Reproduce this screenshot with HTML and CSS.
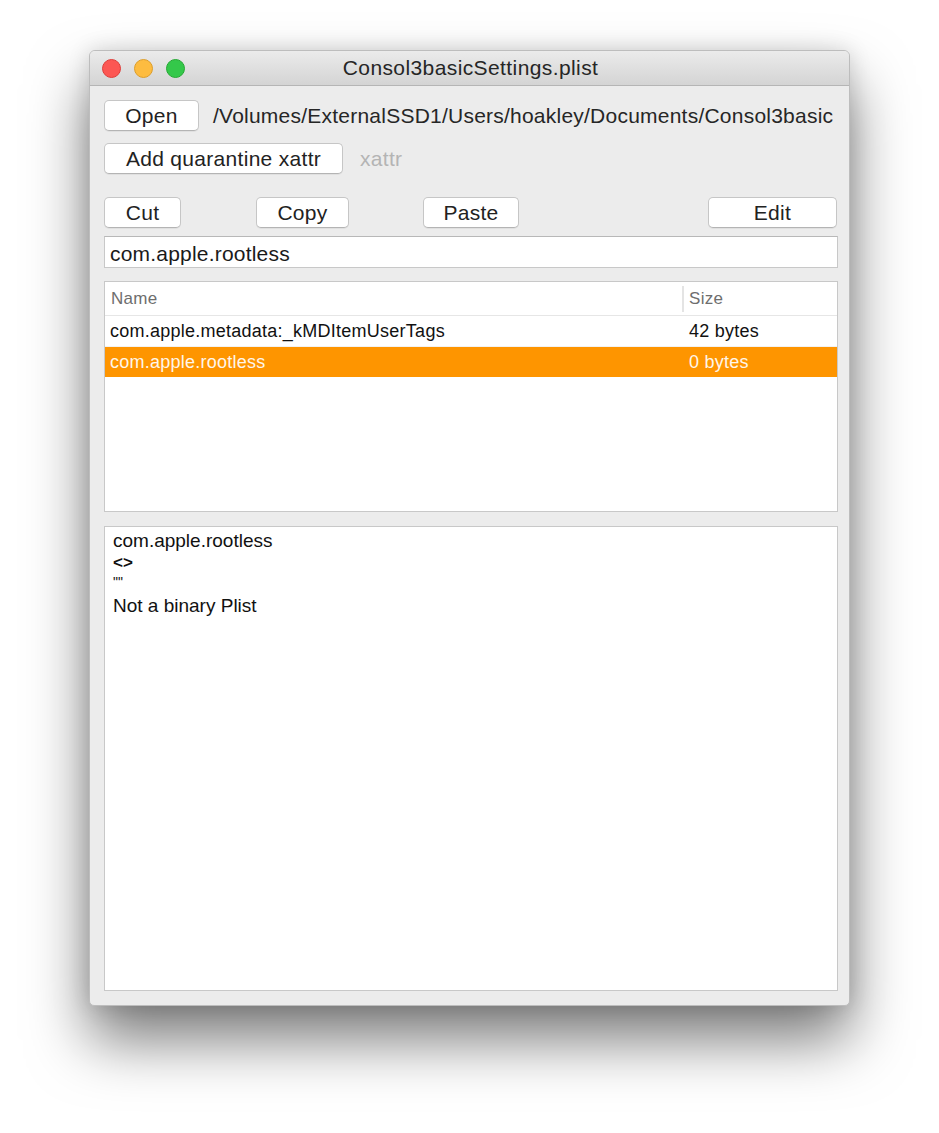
FILE: index.html
```html
<!DOCTYPE html>
<html>
<head>
<meta charset="utf-8">
<link rel="stylesheet" href="styles.css">
</head>
<body>
<div class="window">
  <div class="titlebar">
    <div class="lights">
      <span class="light red"></span>
      <span class="light yellow"></span>
      <span class="light green"></span>
    </div>
    <div class="title">Consol3basicSettings.plist</div>
  </div>
  <div class="content">
    <div class="row row-open">
      <button class="btn btn-open">Open</button>
      <span class="path">/Volumes/ExternalSSD1/Users/hoakley/Documents/Consol3basic</span>
    </div>
    <div class="row row-quar">
      <button class="btn btn-quar">Add quarantine xattr</button>
      <span class="hint">xattr</span>
    </div>
    <div class="row row-edit">
      <button class="btn btn-cut">Cut</button>
      <button class="btn btn-copy">Copy</button>
      <button class="btn btn-paste">Paste</button>
      <button class="btn btn-edit">Edit</button>
    </div>
    <div class="field">com.apple.rootless</div>
    <div class="table">
      <div class="thead">
        <div class="col-name">Name</div>
        <div class="col-size">Size</div>
      </div>
      <div class="trow">
        <div class="col-name">com.apple.metadata:_kMDItemUserTags</div>
        <div class="col-size">42 bytes</div>
      </div>
      <div class="trow selected">
        <div class="col-name">com.apple.rootless</div>
        <div class="col-size">0 bytes</div>
      </div>
    </div>
    <div class="textarea">
      <div class="tline l1">com.apple.rootless</div>
      <div class="tline l2">&lt;&gt;</div>
      <div class="tline l3">""</div>
      <div class="tline l4">Not a binary Plist</div>
    </div>
  </div>
</div>
</body>
</html>
```

FILE: styles.css
```css
html, body {
  margin: 0;
  padding: 0;
  background: #ffffff;
}
html { height: 1133px; }
body {
  font-family: "Liberation Sans", Arial, sans-serif;
  color: #1e1e1e;
  padding: 50px 0 0 89px;
  height: 1133px;
  box-sizing: border-box;
}
.window {
  width: 761px;
  height: 956px;
  box-sizing: border-box;
  border: 1px solid #bdbdbd;
  border-radius: 6px 6px 5px 5px;
  background: #ececec;
  box-shadow: 0 34px 60px rgba(0,0,0,0.52), 0 0 22px rgba(0,0,0,0.14);
  display: flex;
  flex-direction: column;
  overflow: hidden;
}
.titlebar {
  height: 34px;
  flex: none;
  background: linear-gradient(#ebebeb, #d4d4d4);
  border-bottom: 1px solid #b5b5b5;
  display: flex;
  align-items: center;
  position: relative;
}
.lights {
  display: flex;
  gap: 13px;
  margin-left: 12px;
}
.light {
  width: 19px;
  height: 19px;
  border-radius: 50%;
  box-sizing: border-box;
}
.red { background: #fc5753; border: 1px solid #df3d39; }
.yellow { background: #fdbc40; border: 1px solid #dd9e2a; }
.green { background: #34c84a; border: 1px solid #25a933; }
.title {
  position: absolute;
  left: 0;
  right: 0;
  top: 0;
  bottom: 0;
  display: flex;
  align-items: center;
  justify-content: center;
  font-size: 21px;
  letter-spacing: 0.4px;
  color: #262626;
  padding-left: 2px;
}
.content {
  flex: 1;
  display: flex;
  flex-direction: column;
  padding: 14px 11px 14px 14px;
}
.row {
  display: flex;
  align-items: center;
}
.btn {
  font-family: "Liberation Sans", Arial, sans-serif;
  font-size: 21px;
  letter-spacing: 0.3px;
  color: #222;
  background: #ffffff;
  border: 1px solid #c6c6c6;
  border-bottom-color: #b4b4b4;
  border-radius: 5px;
  height: 31px;
  padding: 0;
  box-shadow: 0 1px 0 rgba(0,0,0,0.05);
}
.btn-open { width: 95px; }
.path {
  margin-left: 14px;
  font-size: 21px;
  letter-spacing: 0.23px;
  color: #262626;
  white-space: nowrap;
}
.row-quar { margin-top: 12px; }
.btn-quar { width: 239px; }
.hint {
  margin-left: 17px;
  font-size: 21px;
  letter-spacing: 0.3px;
  color: #b4b4b4;
}
.row-edit { margin-top: 23px; }
.btn-edit, .btn-cut, .btn-copy, .btn-paste { height: 31px; }
.btn-cut { width: 77px; }
.btn-copy { width: 93px; margin-left: 75px; }
.btn-paste { width: 96px; margin-left: 74px; }
.btn-edit { width: 129px; margin-left: auto; margin-right: 1px; }
.field {
  margin-top: 8px;
  height: 32px;
  box-sizing: border-box;
  background: #ffffff;
  border: 1px solid #c8c8c8;
  border-top-color: #b8b8b8;
  font-size: 21px;
  letter-spacing: 0.2px;
  color: #1a1a1a;
  padding: 5px 0 0 5px;
}
.table {
  margin-top: 13px;
  height: 231px;
  box-sizing: border-box;
  background: #ffffff;
  border: 1px solid #c8c8c8;
  display: flex;
  flex-direction: column;
}
.thead {
  display: flex;
  height: 33px;
  flex: none;
  border-bottom: 1px solid #e6e6e6;
  color: #6e6e6e;
  font-size: 17px;
  letter-spacing: 0.3px;
  align-items: center;
}
.thead .col-size {
  border-left: 2px solid #e4e4e4;
  height: 26px;
  display: flex;
  align-items: center;
  padding-left: 5px;
  margin-left: -7px;
}
.col-name {
  width: 584px;
  padding-left: 6px;
  box-sizing: border-box;
}
.col-size {
  flex: 1;
}
.trow {
  display: flex;
  height: 30px;
  align-items: center;
  font-size: 18px;
  letter-spacing: 0.25px;
  color: #111;
  border-bottom: 1px solid #f2f2f2;
}
.trow .col-name { padding-left: 5px; }
.trow.selected {
  background: #fe9500;
  color: #fff6ea;
  border-bottom: none;
}
.textarea {
  margin-top: 14px;
  flex: 1;
  background: #ffffff;
  border: 1px solid #c8c8c8;
  padding: 2px 0 0 8px;
  font-size: 19px;
  color: #111;
}
.tline { line-height: 22px; }
.l1 { line-height: 23px; }
.l2 { font-weight: bold; font-size: 17px; line-height: 22px; }
.l3 { font-size: 14px; line-height: 17px; }
.l4 { margin-top: 4px; }
```
